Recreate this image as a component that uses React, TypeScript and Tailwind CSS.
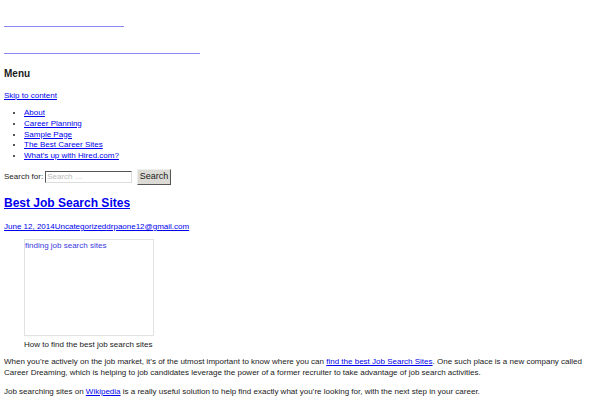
import React from 'react'

const links = ['About', 'Career Planning', 'Sample Page', 'The Best Career Sites', "What's up with Hired.com?"]

export default function App() {
    return (
        <div className="min-h-[400px] bg-white px-[4px] text-[8px] leading-[11px] text-[#1a1a1a] font-['Liberation_Sans',Arial,sans-serif]">
            <div className="pt-[26px]">
                <div className="h-px w-[120px] bg-[#8a8af0]" />
            </div>
            <div className="pt-[26px]">
                <div className="h-px w-[196px] bg-[#8a8af0]" />
            </div>

            <h2 className="mt-[14px] text-[10px] font-bold leading-[12px]">Menu</h2>

            <a href="#" className="mt-[10px] block text-[#0000ee] underline">Skip to content</a>

            <ul className="mt-[7px] list-disc pl-[20px] leading-[10.75px]">
                {links.map((l) => (
                    <li key={l}>
                        <a href="#" className="text-[#0000ee] underline">{l}</a>
                    </li>
                ))}
            </ul>

            <form className="mt-[7px] flex items-center" onSubmit={(e) => e.preventDefault()}>
                <label className="mr-[2px]">Search for:</label>
                <input
                    type="text"
                    placeholder="Search …"
                    className="h-[12px] w-[87px] border border-t-[#555] border-l-[#555] border-b-[#ddd] border-r-[#ddd] px-[1px] text-[8px] placeholder:text-[#bbb] font-['Liberation_Sans',Arial,sans-serif]"
                />
                <button
                    type="submit"
                    className="ml-[5px] h-[16px] border border-t-[#eee] border-l-[#eee] border-b-[#555] border-r-[#555] bg-[#dcdad5] px-[1.5px] text-[9px] font-['Liberation_Sans',Arial,sans-serif]"
                >
                    Search
                </button>
            </form>

            <h1 className="mt-[11px] text-[12px] font-bold leading-[14px]">
                <a href="#" className="text-[#0000ee] underline">Best Job Search Sites</a>
            </h1>

            <div className="mt-[11px]">
                <a href="#" className="text-[#0000ee] underline">June 12, 2014</a>
                <a href="#" className="text-[#0000ee] underline">Uncategorized</a>
                <a href="#" className="text-[#0000ee] underline">drpaone12@gmail.com</a>
            </div>

            <figure className="ml-[20px] mt-[7px]">
                <div className="h-[97px] w-[130px] border border-[#e2e2e2] text-[#3a3ae0]">finding job search sites</div>
                <figcaption className="mt-[3px]">How to find the best job search sites</figcaption>
            </figure>

            <p className="mt-[6px]">
                When you’re actively on the job market, it’s of the utmost important to know where you can{' '}
                <a href="#" className="text-[#0000ee] underline">find the best Job Search Sites</a>. One such place is a new company called Career Dreaming, which is helping to job candidates leverage the power of a former recruiter to take advantage of job search activities.
            </p>

            <p className="mt-[8px]">
                Job searching sites on <a href="#" className="text-[#0000ee] underline">Wikipedia</a> is a really useful solution to help find exactly what you’re looking for, with the next step in your career.
            </p>
        </div>
    )
}
